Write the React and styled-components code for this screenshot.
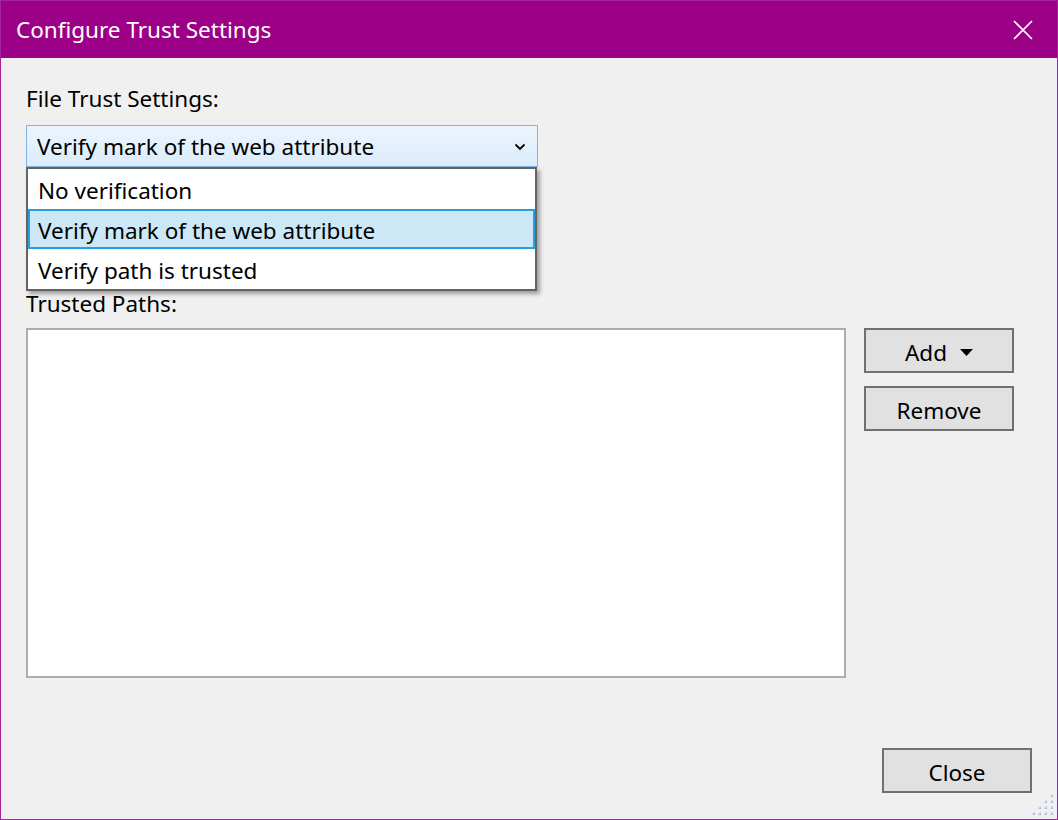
import styled, { createGlobalStyle } from "styled-components";

const GlobalStyle = createGlobalStyle`
  html, body {
    margin: 0;
    padding: 0;
    background: #f0f0f0;
  }
  * {
    box-sizing: border-box;
  }
`;

const Window = styled.div`
  position: relative;
  width: 1058px;
  height: 820px;
  display: flex;
  flex-direction: column;
  background: #f0f0f0;
  border: 1px solid #a4249d;
  font-family: "Noto Sans", "Open Sans", sans-serif;
  color: #000;
`;

const TitleBar = styled.div`
  height: 57px;
  flex-shrink: 0;
  background: #9c0087;
  display: flex;
  align-items: center;
  justify-content: space-between;
  padding: 0 0 0 15px;
  color: #fff;
  font-size: 22.5px;
`;

const CloseX = styled.button`
  width: 46px;
  height: 57px;
  border: 0;
  background: transparent;
  display: flex;
  align-items: center;
  justify-content: center;
  margin-right: 11px;
  padding: 0;
`;

const Body = styled.div`
  flex: 1;
  display: flex;
  flex-direction: column;
  padding: 28px 25px 26px 25px;
`;

const Label = styled.div`
  font-size: 22.5px;
  line-height: 26px;
  margin-bottom: ${(p) => p.$gap || 0}px;
`;

const ComboWrap = styled.div`
  position: relative;
  width: 512px;
`;

const Combo = styled.div`
  height: 42px;
  border: 1px solid #7eb4ea;
  background: linear-gradient(#ecf4fc, #dcecfc);
  display: flex;
  align-items: center;
  justify-content: space-between;
  padding: 1px 11px 0 10px;
  font-size: 22.5px;
`;

const Menu = styled.ul`
  position: absolute;
  top: 42px;
  left: 0;
  width: 511px;
  margin: 0;
  padding: 0;
  list-style: none;
  background: #fff;
  border: 2px solid #646464;
  box-shadow: 3px 3px 4px rgba(0, 0, 0, 0.35);
  z-index: 2;
`;

const MenuItem = styled.li`
  height: 40px;
  display: flex;
  align-items: center;
  padding: 3px 8px 0;
  font-size: 22.5px;
  background: ${(p) => (p.$selected ? "#cce8f6" : "transparent")};
  border: 2px solid ${(p) => (p.$selected ? "#26a0da" : "transparent")};
`;

const Spacer = styled.div`
  height: 124px;
`;

const MainRow = styled.div`
  display: flex;
  gap: 18px;
  margin-top: 11px;
`;

const ListBox = styled.div`
  width: 820px;
  height: 350px;
  background: #fff;
  border: 2px solid #adadad;
`;

const ButtonColumn = styled.div`
  display: flex;
  flex-direction: column;
  gap: 13px;
`;

const Button = styled.button`
  width: 150px;
  height: 45px;
  background: #e1e1e1;
  border: 2px solid #707070;
  font-family: inherit;
  font-size: 22.5px;
  color: #000;
  display: flex;
  align-items: center;
  justify-content: center;
  gap: 13px;
  padding: 3px 0 0;
`;

const Footer = styled.div`
  margin-top: auto;
  display: flex;
  justify-content: flex-end;
`;

const Grip = styled.svg`
  position: absolute;
  right: 4px;
  bottom: 4px;
`;

const options = [
  "No verification",
  "Verify mark of the web attribute",
  "Verify path is trusted",
];

export default function App() {
  const gripDots = [];
  for (let r = 0; r < 4; r++) {
    for (let c = 3 - r; c < 4; c++) {
      gripDots.push(
        <rect key={`${r}-${c}`} x={c * 6} y={r * 6} width="3" height="3" fill="url(#dot)" />
      );
    }
  }

  return (
    <>
      <GlobalStyle />
      <Window>
        <TitleBar>
          <span>Configure Trust Settings</span>
          <CloseX aria-label="Close">
            <svg width="20" height="20" viewBox="0 0 20 20">
              <path d="M1 1 L19 19 M19 1 L1 19" stroke="#fff" strokeWidth="1.6" />
            </svg>
          </CloseX>
        </TitleBar>
        <Body>
          <Label $gap={13}>File Trust Settings:</Label>
          <ComboWrap>
            <Combo>
              <span>Verify mark of the web attribute</span>
              <svg width="12" height="8" viewBox="0 0 12 8">
                <path d="M1.5 1.5 L6 6 L10.5 1.5" fill="none" stroke="#000" strokeWidth="1.8" />
              </svg>
            </Combo>
            <Menu>
              {options.map((o, i) => (
                <MenuItem key={o} $selected={i === 1}>
                  {o}
                </MenuItem>
              ))}
            </Menu>
          </ComboWrap>
          <Spacer />
          <Label>Trusted Paths:</Label>
          <MainRow>
            <ListBox />
            <ButtonColumn>
              <Button>
                Add
                <svg width="13" height="7" viewBox="0 0 13 7">
                  <path d="M0 0 L13 0 L6.5 7 Z" fill="#000" />
                </svg>
              </Button>
              <Button>Remove</Button>
            </ButtonColumn>
          </MainRow>
          <Footer>
            <Button>Close</Button>
          </Footer>
        </Body>
        <Grip width="21" height="21" viewBox="0 0 21 21">
          <defs>
            <linearGradient id="dot" x1="0" y1="0" x2="1" y2="1">
              <stop offset="0" stopColor="#ffffff" />
              <stop offset="1" stopColor="#98a8c8" />
            </linearGradient>
          </defs>
          {gripDots}
        </Grip>
      </Window>
    </>
  );
}
